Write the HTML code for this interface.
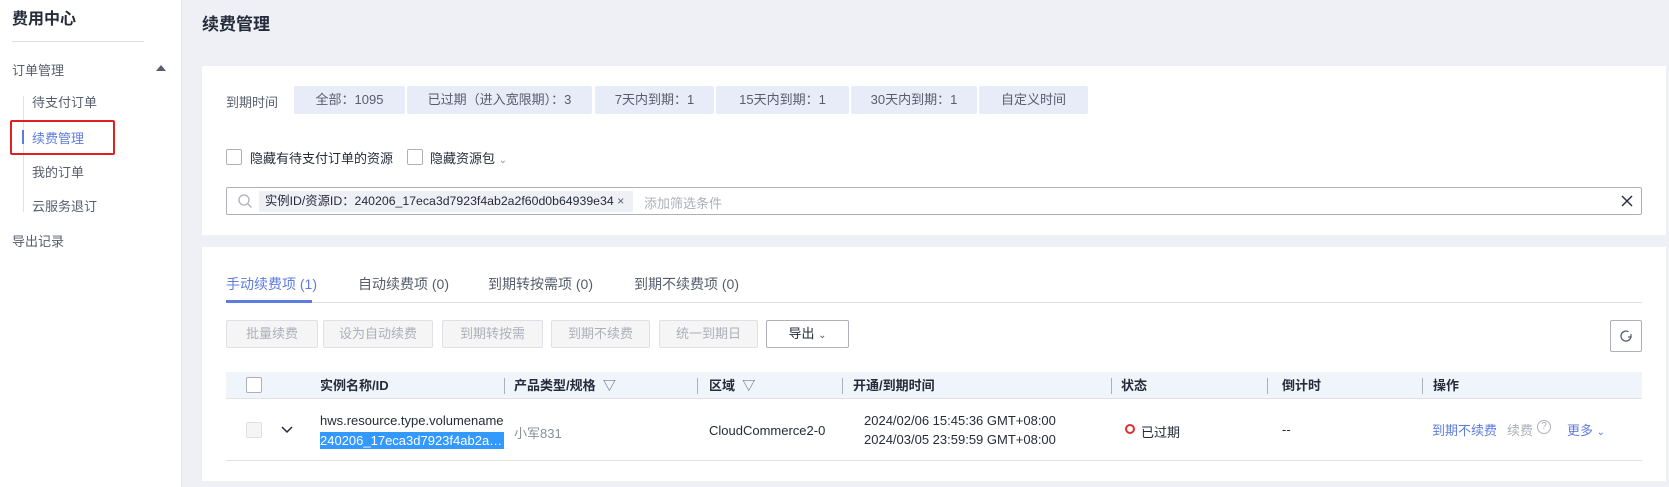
<!DOCTYPE html>
<html><head><meta charset="utf-8"><style>
*{box-sizing:border-box;margin:0;padding:0}
body{width:1669px;height:487px;overflow:hidden;background:#eef0f5;font-family:"Liberation Sans","Noto Sans CJK SC",sans-serif;font-size:13px;color:#252b3a;position:relative}
.a{position:absolute;white-space:nowrap}
.side{position:absolute;left:0;top:0;width:182px;height:487px;background:#fff;border-right:1px solid #e3e5ea}
.card{position:absolute;left:202px;right:3px;background:#fff}
.ft{position:absolute;top:86px;height:28px;background:#e8ecf8;color:#575d6c;text-align:center;line-height:28px;border-radius:2px}
.cb{position:absolute;width:16px;height:16px;border:1px solid #adb0b8;border-radius:2px;background:#fff}
.btn{position:absolute;top:320px;height:28px;border:1px solid #dfe1e6;background:#f5f5f6;color:#adb0b8;text-align:center;line-height:26px;border-radius:2px}
.th{position:absolute;top:372px;height:27px;line-height:27px;font-weight:bold;color:#252b3a}
.dv{position:absolute;top:378px;width:1px;height:16px;background:#adb0b8}
</style></head><body>
<div class="side">
<div class="a" style="left:12px;top:5px;font-size:16px;font-weight:bold">费用中心</div>
<div class="a" style="left:12px;top:41px;width:132px;height:1px;background:#dfe1e6"></div>
<div class="a" style="left:12px;top:60px;color:#575d6c">订单管理</div>
<div class="a" style="left:156px;top:65px;width:0;height:0;border-left:5px solid transparent;border-right:5px solid transparent;border-bottom:6px solid #575d6c"></div>
<div class="a" style="left:23px;top:96px;width:1px;height:116px;background:#dfe1e6"></div>
<div class="a" style="left:32px;top:92px;color:#575d6c">待支付订单</div>
<div class="a" style="left:22px;top:130px;width:2px;height:14px;background:#5e7ce0"></div>
<div class="a" style="left:32px;top:128px;color:#5e7ce0">续费管理</div>
<div class="a" style="left:10px;top:120px;width:105px;height:35px;border:2px solid #e02020;border-radius:2px"></div>
<div class="a" style="left:32px;top:162px;color:#575d6c">我的订单</div>
<div class="a" style="left:32px;top:196px;color:#575d6c">云服务退订</div>
<div class="a" style="left:12px;top:231px;color:#575d6c">导出记录</div>
</div>
<div class="a" style="left:202px;top:10px;font-size:17px;font-weight:bold">续费管理</div>
<div class="card" style="top:66px;height:169px"></div>
<div class="a" style="left:226px;top:92px;color:#575d6c">到期时间</div>
<div class="ft" style="left:294px;width:111px">全部：1095</div>
<div class="ft" style="left:407px;width:185px">已过期（进入宽限期）：3</div>
<div class="ft" style="left:595px;width:119px">7天内到期：1</div>
<div class="ft" style="left:716px;width:133px">15天内到期：1</div>
<div class="ft" style="left:851px;width:126px">30天内到期：1</div>
<div class="ft" style="left:979px;width:109px">自定义时间</div>
<div class="cb" style="left:226px;top:149px"></div>
<div class="a" style="left:250px;top:148px">隐藏有待支付订单的资源</div>
<div class="cb" style="left:407px;top:149px"></div>
<div class="a" style="left:430px;top:148px">隐藏资源包 <span style="color:#8a8e99;font-size:10px">&#8964;</span></div>
<div class="a" style="left:226px;top:187px;width:1416px;height:28px;border:1px solid #adb0b8;border-radius:2px"></div>
<svg class="a" style="left:237px;top:193px" width="16" height="16" viewBox="0 0 16 16"><circle cx="7" cy="7" r="5" fill="none" stroke="#adb0b8" stroke-width="1.3"/><path d="M11 11l3.5 3.5" stroke="#adb0b8" stroke-width="1.3"/></svg>
<div class="a" style="left:259px;top:191px;width:374px;height:21px;background:#eef0f5;line-height:21px;padding-left:6px;font-size:12.3px;overflow:hidden">实例ID/资源ID：240206_17eca3d7923f4ab2a2f60d0b64939e34 <span style="color:#575d6c">×</span></div>
<div class="a" style="left:644px;top:193px;color:#adb0b8">添加筛选条件</div>
<svg class="a" style="left:1621px;top:195px" width="12" height="12"><path d="M1 1l10 10M11 1L1 11" stroke="#252b3a" stroke-width="1.4"/></svg>
<div class="card" style="top:247px;height:234px"></div>
<div class="a" style="left:226px;top:274px;font-size:14px;color:#5e7ce0">手动续费项 (1)</div>
<div class="a" style="left:358px;top:274px;font-size:14px;color:#575d6c">自动续费项 (0)</div>
<div class="a" style="left:488px;top:274px;font-size:14px;color:#575d6c">到期转按需项 (0)</div>
<div class="a" style="left:634px;top:274px;font-size:14px;color:#575d6c">到期不续费项 (0)</div>
<div class="a" style="left:226px;top:302px;width:1416px;height:1px;background:#dfe1e6"></div>
<div class="a" style="left:226px;top:300px;width:86px;height:3px;background:#5e7ce0"></div>
<div class="btn" style="left:226px;width:92px">批量续费</div>
<div class="btn" style="left:323px;width:110px">设为自动续费</div>
<div class="btn" style="left:442px;width:101px">到期转按需</div>
<div class="btn" style="left:551px;width:99px">到期不续费</div>
<div class="btn" style="left:659px;width:99px">统一到期日</div>
<div class="btn" style="left:766px;width:83px;background:#fff;border-color:#adb0b8;color:#252b3a">导出 <span style="font-size:10px;color:#575d6c">&#8964;</span></div>
<div class="a" style="left:1610px;top:320px;width:32px;height:32px;border:1px solid #adb0b8;border-radius:2px"></div>
<svg class="a" style="left:1618px;top:328px" width="16" height="16" viewBox="0 0 16 16"><path d="M13 8A5 5 0 1 1 10.5 3.7" fill="none" stroke="#575d6c" stroke-width="1.3"/><path d="M13 6v3h-3" fill="none" stroke="#575d6c" stroke-width="1.2"/></svg>
<div class="a" style="left:226px;top:372px;width:1416px;height:27px;background:#f0f4fb;border-bottom:1px solid #dfe1e6"></div>
<div class="cb" style="left:246px;top:377px"></div>
<div class="th" style="left:320px">实例名称/ID</div>
<div class="dv" style="left:504px"></div><div class="th" style="left:514px">产品类型/规格 <span style="font-weight:normal;color:#575d6c">&nbsp;▽</span></div>
<div class="dv" style="left:697px"></div><div class="th" style="left:709px">区域 <span style="font-weight:normal;color:#575d6c">&nbsp;▽</span></div>
<div class="dv" style="left:842px"></div><div class="th" style="left:853px">开通/到期时间</div>
<div class="dv" style="left:1111px"></div><div class="th" style="left:1121px">状态</div>
<div class="dv" style="left:1267px"></div><div class="th" style="left:1282px">倒计时</div>
<div class="dv" style="left:1422px"></div><div class="th" style="left:1433px">操作</div>
<div class="cb" style="left:246px;top:422px;background:#f5f5f6;border-color:#dfe1e6"></div>
<svg class="a" style="left:280px;top:425px" width="14" height="10"><path d="M2 2l5 5 5-5" fill="none" stroke="#252b3a" stroke-width="1.5"/></svg>
<div class="a" style="left:320px;top:413px">hws.resource.type.volumename</div>
<div class="a" style="left:320px;top:432px;width:184px;height:17px;background:#3399ff;color:#fff;line-height:17px">240206_17eca3d7923f4ab2a…</div>
<div class="a" style="left:514px;top:423px;color:#8a8e99">小军831</div>
<div class="a" style="left:709px;top:423px">CloudCommerce2-0</div>
<div class="a" style="left:864px;top:413px">2024/02/06 15:45:36 GMT+08:00</div>
<div class="a" style="left:864px;top:432px">2024/03/05 23:59:59 GMT+08:00</div>
<div class="a" style="left:1125px;top:424px;width:10px;height:10px;border:2.5px solid #e03030;border-radius:50%"></div>
<div class="a" style="left:1141px;top:422px">已过期</div>
<div class="a" style="left:1282px;top:422px">--</div>
<div class="a" style="left:1432px;top:420px;color:#5e7ce0">到期不续费</div>
<div class="a" style="left:1507px;top:420px;color:#adb0b8">续费</div>
<div class="a" style="left:1537px;top:420px;width:14px;height:14px;border:1px solid #adb0b8;border-radius:50%;color:#adb0b8;font-size:10px;text-align:center;line-height:12px">?</div>
<div class="a" style="left:1567px;top:420px;color:#5e7ce0">更多 <span style="font-size:10px">&#8964;</span></div>
<div class="a" style="left:226px;top:460px;width:1416px;height:1px;background:#dfe1e6"></div>
</body></html>
